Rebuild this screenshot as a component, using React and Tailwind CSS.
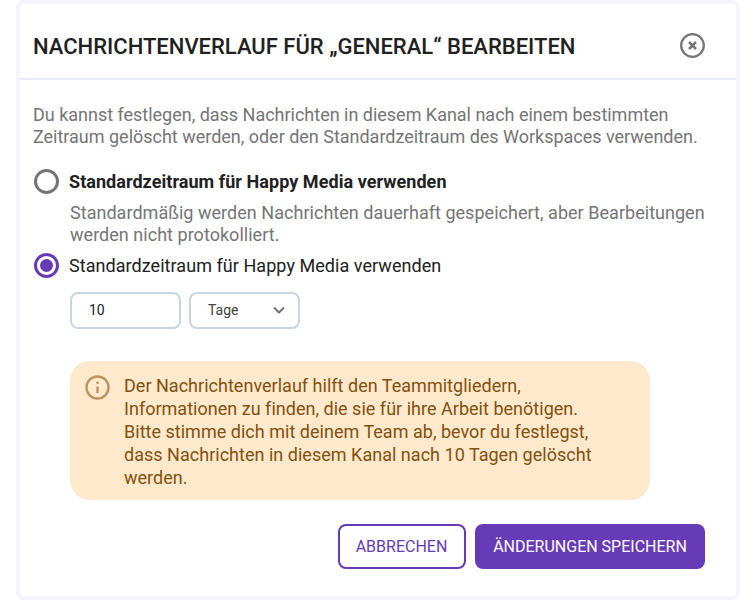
import React from "react";

const Radio = ({ checked }) => (
  <span
    className={`flex h-[25px] w-[25px] shrink-0 items-center justify-center rounded-full border-[3px] ${
      checked ? "border-[#673ab7]" : "border-[#757575]"
    }`}
  >
    {checked && <span className="h-[13px] w-[13px] rounded-full bg-[#673ab7]" />}
  </span>
);

const App = () => {
  return (
    <div className="h-[600px] w-[756px] bg-white px-4 font-['Roboto',sans-serif]">
      <div className="flex h-[600px] w-[724px] flex-col rounded-lg border-4 border-[#f5f3ff] bg-white">
        <header className="flex h-[76px] shrink-0 items-center justify-between border-b-2 border-[#e8ecf2] pl-[13px] pr-[30px] pt-[10px]">
          <h2 className="text-[22px] font-medium text-[#212121]">
            NACHRICHTENVERLAUF FÜR „GENERAL“ BEARBEITEN
          </h2>
          <svg width="26" height="26" viewBox="0 0 26 26" fill="none" stroke="#757575">
            <circle cx="12.5" cy="12.5" r="11.3" strokeWidth="2.3" />
            <path d="M9 9l7 7M16 9l-7 7" strokeWidth="2.5" />
          </svg>
        </header>

        <div className="flex flex-1 flex-col pl-[13px] pr-[30px] pt-[24px]">
          <p className="text-[18px] leading-[22px] tracking-[-0.013px] text-[#757575]">
            Du kannst festlegen, dass Nachrichten in diesem Kanal nach einem bestimmten
            <br />
            Zeitraum gelöscht werden, oder den Standardzeitraum des Workspaces verwenden.
          </p>

          <label className="mt-[21px] flex h-[25px] items-center gap-[10px] pl-[1px]">
            <Radio />
            <span className="text-[18px] font-bold tracking-[0.05px] text-[#212121]">
              Standardzeitraum für Happy Media verwenden
            </span>
          </label>
          <p className="ml-[37px] mt-[8px] text-[18px] leading-[22px] tracking-[0.03px] text-[#757575]">
            Standardmäßig werden Nachrichten dauerhaft gespeichert, aber Bearbeitungen
            <br />
            werden nicht protokolliert.
          </p>

          <label className="mt-[7px] flex h-[25px] items-center gap-[10px] pl-[1px]">
            <Radio checked />
            <span className="text-[18px] tracking-[0.05px] text-[#212121]">
              Standardzeitraum für Happy Media verwenden
            </span>
          </label>

          <div className="ml-[37px] mt-[14px] flex gap-2">
            <div className="flex h-[37px] w-[111px] items-center rounded-lg border-2 border-[#c8d5e0] pl-[17px] text-[14px] text-[#212121]">
              10
            </div>
            <div className="flex h-[37px] w-[111px] items-center justify-between rounded-lg border-2 border-[#c8d5e0] pl-[17px] pr-[12px] text-[14px] text-[#424242]">
              Tage
              <svg width="14" height="9" viewBox="0 0 14 9" fill="none" stroke="#757575" strokeWidth="2">
                <path d="M2 1.5l5 5 5-5" />
              </svg>
            </div>
          </div>

          <div className="ml-[37px] mt-[32px] flex h-[139px] w-[580px] gap-[14px] rounded-[20px] bg-[#ffe9cc] pl-[15px] pt-[13px]">
            <svg className="mt-[1px] shrink-0" width="25" height="25" viewBox="0 0 25 25" fill="none" stroke="#bd945f">
              <circle cx="12.5" cy="12.5" r="11" strokeWidth="2.4" />
              <path d="M12.5 11.5v6.5" strokeWidth="2.4" />
              <circle cx="12.5" cy="7.8" r="1.4" fill="#bd945f" stroke="none" />
            </svg>
            <p className="text-[18px] leading-[23px] tracking-[0.02px] text-[#85500c]">
              Der Nachrichtenverlauf hilft den Teammitgliedern,
              <br />
              Informationen zu finden, die sie für ihre Arbeit benötigen.
              <br />
              Bitte stimme dich mit deinem Team ab, bevor du festlegst,
              <br />
              dass Nachrichten in diesem Kanal nach 10 Tagen gelöscht
              <br />
              werden.
            </p>
          </div>

          <div className="mt-[24px] flex justify-end gap-[9px] pr-[1px]">
            <button
              type="button"
              className="h-[45px] w-[128px] rounded-lg border-2 border-[#673ab7] pr-[1px] text-[16px] text-[#673ab7]"
            >
              ABBRECHEN
            </button>
            <button
              type="button"
              className="h-[45px] w-[230px] rounded-lg bg-[#673ab7] text-[16px] text-white"
            >
              ÄNDERUNGEN SPEICHERN
            </button>
          </div>
        </div>
      </div>
    </div>
  );
};

export default App;
